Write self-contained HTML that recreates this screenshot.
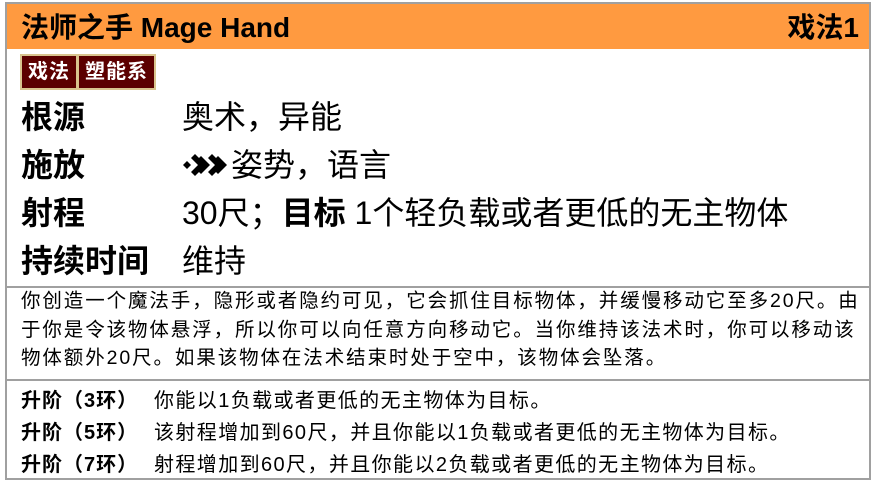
<!DOCTYPE html>
<html><head><meta charset="utf-8"><style>
body{margin:0;width:873px;height:480px;background:#fff;font-family:"Liberation Sans","Noto Sans CJK SC",sans-serif;color:#000;overflow:hidden}
.card{position:absolute;left:5px;top:2px;width:862px;height:474px;border:2px solid #a0a0a0}
.hd{position:absolute;left:0;top:0;width:862px;height:45px;background:#ff9a40;font-weight:bold;font-size:28px}
.hd .l{position:absolute;left:14px;top:2px}
.hd .r{position:absolute;right:10px;top:2px}
.tags{position:absolute;left:13px;top:50px;height:32px;background:#d9c48e;padding:2px;display:flex;gap:3px}
.tag{background:#5c0000;color:#fff;font-weight:bold;font-size:20px;line-height:32px;padding:0 6px;letter-spacing:1px}
.row{position:absolute;left:14px;font-size:32px;line-height:44px;white-space:nowrap}
.row b{display:inline-block;width:161px}
.sep{position:absolute;left:0;width:862px;height:2px;background:#a0a0a0}
.desc{position:absolute;left:14px;top:283px;font-size:19.5px;line-height:28.5px;white-space:nowrap;letter-spacing:1.9px}
.up{position:absolute;left:14px;font-size:20px;white-space:nowrap;letter-spacing:1.4px}
.up b{display:inline-block;width:133px;letter-spacing:1px}
</style></head><body>
<div class="card">
<div class="hd"><span class="l">法师之手 Mage Hand</span><span class="r">戏法1</span></div>
<div class="tags"><span class="tag">戏法</span><span class="tag">塑能系</span></div>
<div class="row" style="top:91px"><b>根源</b>奥术，异能</div>
<div class="row" style="top:139px"><b>施放</b><svg width="49" height="28" viewBox="0 0 49 28" style="vertical-align:-3px"><path d="M5 10 L9 14 L5 18 L1 14Z M13 3 L24 14 L13 25 L9 21 L16 14 L9 7Z M30 3 L41 14 L30 25 L26 21 L33 14 L26 7Z M19 5 L28 14 L19 23 L15 19 L20 14 L15 9Z M36 5 L45 14 L36 23 L32 19 L37 14 L32 9Z" fill="#000"/></svg>姿势，语言</div>
<div class="row" style="top:187px"><b>射程</b>30尺；<strong>目标</strong> 1个轻负载或者更低的无主物体</div>
<div class="row" style="top:235px"><b>持续时间</b>维持</div>
<div class="sep" style="top:282px"></div>
<div class="desc">你创造一个魔法手，隐形或者隐约可见，它会抓住目标物体，并缓慢移动它至多20尺。由<br>于你是令该物体悬浮，所以你可以向任意方向移动它。当你维持该法术时，你可以移动该<br>物体额外20尺。如果该物体在法术结束时处于空中，该物体会坠落。</div>
<div class="sep" style="top:375px"></div>
<div class="up" style="top:380px"><b>升阶（3环）</b>你能以1负载或者更低的无主物体为目标。</div>
<div class="up" style="top:412px"><b>升阶（5环）</b>该射程增加到60尺，并且你能以1负载或者更低的无主物体为目标。</div>
<div class="up" style="top:444px"><b>升阶（7环）</b>射程增加到60尺，并且你能以2负载或者更低的无主物体为目标。</div>
</div>
</body></html>
